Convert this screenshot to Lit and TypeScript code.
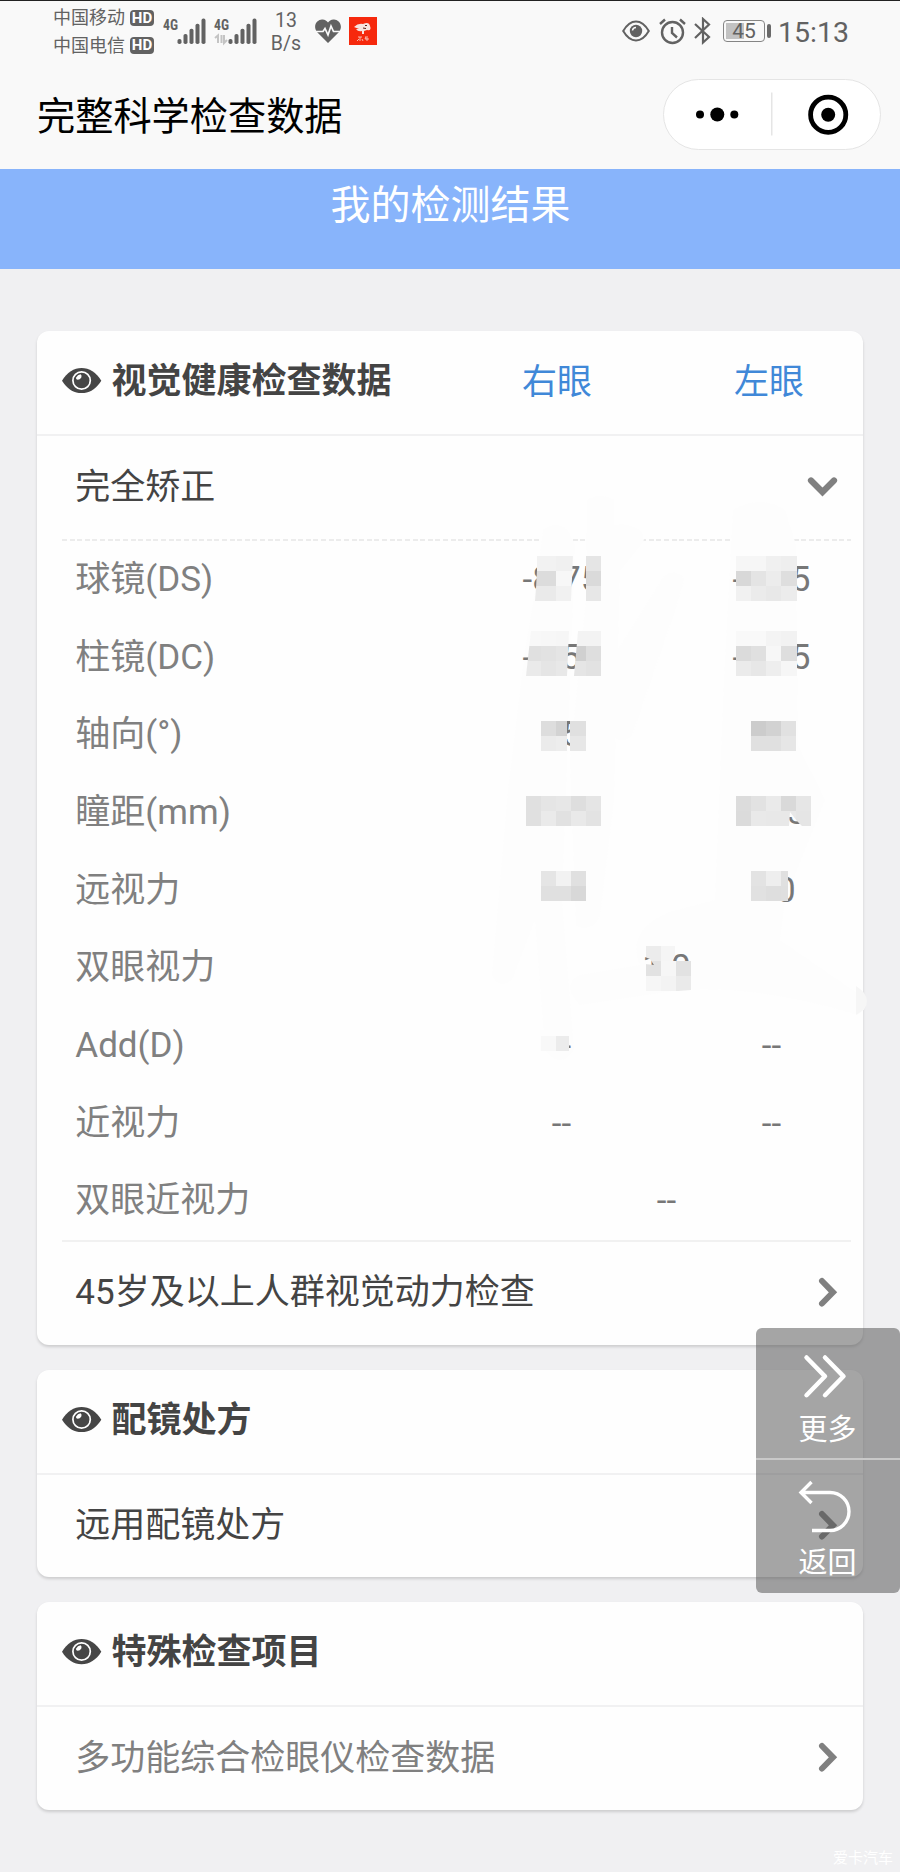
import { LitElement, html, css, svg } from "lit";
import { customElement, property } from "lit/decorators.js";

const EYE = svg`<path d="M0 12.700C5 4.500 12 0 19.600 0S34.300 4.500 39.300 12.700C34.300 21 27.200 25.200 19.600 25.200S5 21 0 12.700Z" fill="#464646"/>
  <circle cx="19.600" cy="12.500" r="8.700" fill="#464646" stroke="#fff" stroke-width="1.700"/>
  <path d="M14.200 9.500Q15.500 6.800 18.600 6.200Q20.300 7.600 19.200 9.700Q17.600 12.200 14.800 11.600Q13.700 11 14.200 9.500Z" fill="#fff"/>`;

@customElement("eye-title")
export class EyeTitle extends LitElement {
  @property() text = "";
  static styles = css`
    :host { display: flex; align-items: center; gap: 10px; }
    .eye { width: 39.300px; height: 25.200px; flex: none; position: relative; top: -1.800px; }
    .text { font-weight: 700; line-height: 52px; color: #444; white-space: nowrap; position: relative; top: -0.500px; }
  `;
  render() {
    return html`<svg class="eye" viewBox="0 0 39.3 25.2">${EYE}</svg><span class="text">${this.text}</span>`;
  }
}

@customElement("link-row")
export class LinkRow extends LitElement {
  @property() text = "";
  @property({ type: Boolean }) open = false;
  @property({ type: Boolean }) muted = false;
  static styles = css`
    :host { display: flex; align-items: center; justify-content: space-between; height: 100%;
      padding: 0 25.500px 2px 38px; color: #444; box-sizing: border-box; }
    .text { line-height: 52px; white-space: nowrap; position: relative; top: 1px; }
    .muted { color: #808080; }
    svg { flex: none; overflow: visible; }
  `;
  render() {
    return html`<span class="text ${this.muted ? "muted" : ""}">${this.text}</span>
      ${this.open
        ? html`<svg width="31" height="20" viewBox="0 0 31 20"><path d="M4 3.500L15.500 15L27 3.500" fill="none" stroke="#808080" stroke-width="6.200" stroke-linecap="round"/></svg>`
        : html`<svg width="20" height="31" viewBox="0 0 20 31"><path d="M4 4L15 15.300L4 26.500" fill="none" stroke="#808080" stroke-width="6" stroke-linecap="round"/></svg>`}`;
  }
}

// "#" is a covered digit and "_" a covered decimal point.
const rows: [string, string[]][] = [
  ["球镜(DS)", ["-8_75", "-#_#5"]],
  ["柱镜(DC)", ["-#_5#", "-#_#5"]],
  ["轴向(°)", ["#5", ""]],
  ["瞳距(mm)", ["", "##_5"]],
  ["远视力", ["", "#_0"]],
  ["双眼视力", ["1_0"]],
  ["Add(D)", ["--", "--"]],
  ["近视力", ["--", "--"]],
  ["双眼近视力", ["--"]],
];

// Mosaic patches: x, y, column width list, row height list, greys, optional clip outline.
type Patch = { x: number; y: number; w: number[]; h: number[]; g: number[][]; clip?: string };
const patches: Patch[] = [
  { x: 535, y: 555.5, w: [20.5, 15, 2], h: [15, 15, 15], g: [[242, 240, 240], [220, 247, 247], [234, 241, 241]],
    clip: "537,555 573,555 571,601 535,601 536,588 537,570" },
  { x: 586, y: 555.5, w: [15], h: [15, 15, 15], g: [[229], [218], [231]] },
  { x: 735.5, y: 555.5, w: [15, 15.5, 15, 15.5], h: [15, 15, 15], g: [[246, 246, 240, 238], [216, 228, 236, 222], [241, 235, 232, 236]] },
  { x: 526, y: 631, w: [14.5, 15, 13.5], h: [15, 15, 15], g: [[248, 247, 246], [224, 226, 229], [234, 229, 232]],
    clip: "531,631 569,631 567,676 526,676" },
  { x: 574, y: 631, w: [12, 15], h: [15, 15, 15], g: [[243, 243], [208, 222], [229, 226]],
    clip: "578,631 601,631 601,676 574,676" },
  { x: 735.5, y: 631, w: [15, 15.5, 15, 15.5], h: [15, 15, 15], g: [[249, 249, 244, 242], [219, 224, 247, 222], [235, 231, 238, 246]] },
  { x: 540.5, y: 721, w: [15, 11], h: [15, 15], g: [[221, 211], [235, 237]] },
  { x: 570, y: 721, w: [15.5], h: [15, 15], g: [[224], [231]] },
  { x: 750.5, y: 721, w: [15.5, 15, 15], h: [15, 15], g: [[204, 210, 225], [224, 224, 230]] },
  { x: 525.5, y: 796, w: [15, 15, 15, 15, 15], h: [15, 15], g: [[224, 229, 231, 222, 229], [224, 234, 225, 233, 227]] },
  { x: 735.5, y: 796, w: [15, 15, 15, 15, 15], h: [15, 15], g: [[220, 226, 234, 217, 230], [219, 233, 232, 232, 229]],
    clip: "735,796 811,796 811,826 802,826 797,821 790,812 789,826 735,826" },
  { x: 540.5, y: 871, w: [15, 15, 15.5], h: [15, 15], g: [[229, 242, 224], [224, 224, 216]] },
  { x: 750.5, y: 871, w: [15.5, 15, 6.5], h: [15, 15], g: [[227, 238, 224], [225, 222, 223]] },
  { x: 645.5, y: 946, w: [15, 15, 15], h: [15, 15, 15], g: [[236, 245, 255], [226, 246, 226], [246, 243, 234]],
    clip: "645,946 675,946 675,956 672,961 691,961 691,990 678,991 645,991 645,964 654,965 650,959 645,957" },
  { x: 540.5, y: 1036, w: [15, 13], h: [15], g: [[248, 236]] },
];

/* The faint brush marks that lie under the values. */
@customElement("brush-layer")
export class BrushLayer extends LitElement {
  static styles = css`
    :host { display: block; }
    svg { display: block; }
  `;
  render() {
    return html`<svg width="900" height="700" viewBox="0 430 900 700">
      <path fill="#fdfdfd" d="M543 530Q548 525 556 525T569 532L575 545L562 900L574 1050Q560 1070 545 1050L535 920L512 980Q498 990 492 975L508 790L525 650L537 580Z"/>
      <path fill="#fdfdfd" d="M587 500Q600 492 614 500V525Q640 522 644 540L620 570L614 800L600 915Q590 935 576 925L570 760L586 600Z"/>
      <path fill="#fdfdfd" d="M665 575Q678 568 684 580L675 610L632 735Q622 745 612 735L618 650Z"/>
      <path fill="#fdfdfd" d="M733 510Q760 494 785 510L796 545L798 745L825 800L785 900L780 940L860 995Q872 1005 858 1015Q760 985 680 990L580 1005Q560 985 580 975L640 965Q625 930 670 912L715 900L724 680Z"/>
      <path fill="#f6f6f6" d="M856 986Q867 993 867 1001T856 1015Z"/>
    </svg>`;
  }
}

@customElement("mosaic-layer")
export class MosaicLayer extends LitElement {
  static styles = css`
    :host { display: block; }
    svg { display: block; overflow: visible; }
  `;
  render() {
    return html`<svg width="900" height="700" viewBox="0 430 900 700" shape-rendering="crispEdges">
      <path fill="#fdfdfd" d="M540 1051H568.500V1030H540ZM735 826H789V830H735ZM750 901H786L787 896H750Z"/>
      ${patches.map((p, i) => {
        const cells: unknown[] = [];
        let y = p.y;
        p.h.forEach((h, r) => {
          let x = p.x;
          p.w.forEach((w, c) => {
            const v = p.g[r][c];
            if (v < 255) cells.push(svg`<rect x=${x} y=${y} width=${w} height=${h} fill=${`rgb(${v},${v},${v})`}></rect>`);
            x += w;
          });
          y += h;
        });
        return p.clip
          ? svg`<clipPath id=${"c" + i}><polygon points=${p.clip}></polygon></clipPath><g clip-path=${`url(#c${i})`}>${cells}</g>`
          : svg`<g>${cells}</g>`;
      })}
    </svg>`;
  }
}

@customElement("status-bar")
export class StatusBar extends LitElement {
  static styles = css`
    :host { display: flex; height: 62px; box-sizing: border-box; border-top: 1px solid #222; color: #626262;
      padding-left: 53px; align-items: flex-start; font-size: 18px; }
    .carriers { display: grid; grid-template-rows: 27.500px 27.500px; padding-top: 3px; }
    .carrier { display: flex; align-items: center; gap: 5px; line-height: 27px; }
    .hd { width: 24px; height: 16.500px; border-radius: 4px; background: #626262; color: #fff; font: 700 15px/17px Roboto, sans-serif;
      text-align: center; }
    .icons { width: 94px; height: 40px; margin: 7px 0 0 9px; }
    .g4 { font: 700 15px "Roboto Condensed", Roboto, sans-serif; fill: #626262; }
    .rate { width: 40px; margin: 8px 0 0 9px; text-align: center; font-size: 19.500px; line-height: 23px; }
    .heart { width: 26px; height: 24px; margin: 17.500px 0 0 9px; }
    .app { width: 28px; height: 28px; margin: 16px 0 0 8px; }
    .right { display: flex; margin-left: auto; padding-right: 52px; height: 60px; align-items: center; }
    .alarm { margin-left: 9px; }
    .bluetooth { margin-left: 8px; }
    .battery { width: 40px; height: 20px; border: 1.500px solid #858585; border-radius: 4px;
      background: linear-gradient(90deg, #c2c2c2 0 18px, transparent 18px) 2px 2px / 36px 16px no-repeat; margin-left: 12px;
      text-align: center; font-size: 21px; line-height: 21px; }
    .nub { width: 3.500px; height: 14px; border-radius: 2px; background: #6a6a6a; margin-left: 2px; }
    .time { font-size: 28.500px; line-height: 34px; margin-left: 8px; width: 69.500px; white-space: nowrap; position: relative; top: 2px; left: -0.500px; }
  `;
  bars(x: number) {
    return [0, 1, 2, 3, 4].map((i) => svg`<rect x=${x + i * 6} y=${31 - i * 5.1} width="4" height=${5 + i * 5.1} rx="1.8" fill="#626262"></rect>`);
  }
  render() {
    return html`
      <div class="carriers">
        <div class="carrier"><span>中国移动</span><span class="hd">HD</span></div>
        <div class="carrier"><span>中国电信</span><span class="hd">HD</span></div>
      </div>
      <svg class="icons" viewBox="0 0 94 40">
        <text class="g4" x="0" y="22" textLength="15" lengthAdjust="spacingAndGlyphs">4G</text>
        <text class="g4" x="51" y="22" textLength="15" lengthAdjust="spacingAndGlyphs">4G</text>
        ${this.bars(14.5)}${this.bars(65.5)}
        <path d="M52 30l3-2.500v7.500M58.500 27v8M61 27v8l3-3" fill="none" stroke="#c4c4c4" stroke-width="2"/>
      </svg>
      <div class="rate">13<br />B/s</div>
      <svg class="heart" viewBox="0 0 26 24"><path d="M13 24L2 13C-3 6 3 0 7.500 0.500C10 0.500 12 2 13 3.500C14 2 16 .5 18.500 .5C23 0 29 6 24 13Z" fill="#626262"/>
        <path d="M0 12.500H8L10 9.500L13 16L16 7L18.500 12.500H26" fill="none" stroke="#f9f9f9" stroke-width="1.700"/></svg>
      <svg class="app" viewBox="0 0 28 28"><rect width="28" height="28" fill="#f6290d"/>
        <path d="M5 10Q9 6 14 7Q20 4 21 9Q23 14 18 13L15 14V17H13V14Q9 15 7 12H10Z" fill="#f7e4df"/>
        <path d="M16 8.500h2M14 11l3 .5" stroke="#5b2018" stroke-width="1"/>
        <path d="M9 20h4M8 24l2-2M11 20v4M13 22l1 2M16 20l3 0M17 20l-1 2h4M18 21v3" stroke="#f7c8bd" fill="none" stroke-width=".9"/></svg>
      <div class="right">
        <svg width="28" height="22" viewBox="0 0 28 22"><path d="M1.200 11C5 4.500 9 1.500 14 1.500S23 4.500 26.800 11C23 17.500 19 20.500 14 20.500S5 17.500 1.200 11Z" fill="none" stroke="#626262" stroke-width="2"/>
          <circle cx="14" cy="11" r="6.200" fill="#626262"/><path d="M10.500 10.500A3.500 3.500 0 0 1 14 7.500" stroke="#f9f9f9" stroke-width="1.500" fill="none"/></svg>
        <svg class="alarm" width="27" height="27" viewBox="0 0 27 27"><circle cx="13.500" cy="14.500" r="10.500" fill="none" stroke="#626262" stroke-width="2.400"/>
          <path d="M13 9V15L18 19.500M1 6L6 1.500M21 1.500L26 6" fill="none" stroke="#626262" stroke-width="2.400"/></svg>
        <svg class="bluetooth" width="17" height="28" viewBox="0 0 17 28"><path d="M1 7L15 20L9 25.500V2L15 7.500L1 21" fill="none" stroke="#626262" stroke-width="2.200"/></svg>
        <div class="battery">45</div><div class="nub"></div>
        <div class="time">15:13</div>
      </div>`;
  }
}

@customElement("app-root")
export class AppRoot extends LitElement {
  static styles = css`
    :host { display: block; position: relative; width: 900px; height: 1872px; overflow: hidden; background: #f0f0f2;
      font-family: Roboto, "Noto Sans CJK SC", sans-serif; font-weight: 400; font-size: 35px; color: #808080; }
    .top { height: 168.500px; background: #f9f9f9; }
    .nav { height: 106px; box-sizing: border-box; padding: 17px 19px 18.500px 37px; display: flex; justify-content: space-between; align-items: center; }
    .nav h1 { margin: 0; font-size: 38.200px; font-weight: 400; color: #000; line-height: 56px; position: relative; top: 3px; }
    .capsule { width: 218px; height: 71px; box-sizing: border-box; border: 1.500px solid #e5e5e5; border-radius: 36px; background: #fff; }
    .capsule svg { display: block; margin: -1px; }
    .banner { height: 100px; background: #88b4fb; color: #fff; font-size: 40px; line-height: 60px; text-align: center; box-sizing: border-box; padding: 7.500px 0 0 1px; }
    .cards { padding: 62.500px 37px 0 37.300px; display: flex; flex-direction: column; gap: 25px; }
    .card { background: #fefefe; border-radius: 12px; box-shadow: 0 2px 3px rgba(0, 0, 0, .15); display: flow-root; }
    .head { height: 105px; box-sizing: border-box; border-bottom: 2px solid #f1f1f2; padding-left: 25px; display: flex; align-items: center; }
    .eyes { margin-left: auto; margin-right: -12px; display: grid; grid-template-columns: 212px 212px; text-align: center; color: #4088d8; line-height: 52px; }
    .line { height: 103px; }
    .dashed { height: 2px; margin: 0 12px 0 25px; background: repeating-linear-gradient(90deg, #ececec 0 5px, transparent 5px 7.620px); }
    .rows { position: relative; z-index: 2; }
    .row { display: grid; grid-template-columns: 381.200px 210px 210px; height: 77.700px; align-items: center; padding-left: 38px; width: 801px; line-height: 50px; white-space: nowrap; }
    .value { text-align: center; color: #777; }
    .both { grid-column: 2 / 4; }
    .digit { display: inline-block; width: .5615em; }
    .point { display: inline-block; width: .263em; }
    .solid { height: 2px; margin: 0 12px 0 25px; background: #f1f1f1; }
    .last { height: 102.600px; }
    .brush { position: absolute; left: 0; top: 430px; z-index: 1; }
    .mosaic { position: absolute; left: 0; top: 430px; z-index: 3; }
    .side { position: absolute; right: 0; top: 1327.500px; width: 144px; color: #fff; font-size: 29px; z-index: 4; }
    .tool { height: 130px; background: rgba(85, 85, 85, .53); box-sizing: border-box; padding-left: 42px; border-radius: 6px 6px 0 0; display: flex; flex-direction: column; }
    .tool + .tool { border-top: 2px solid #c9c9c9; border-radius: 0 0 6px 6px; height: 135px; background-clip: padding-box; }
    .tool svg { display: block; flex: none; }
    .tool span { line-height: 42px; padding-left: 0.500px; }
    .mark { position: absolute; right: 7px; bottom: 3px; font-size: 15px; line-height: 22px; color: #fff; }
  `;
  value(v: string) {
    return [...v].map((c) => (c === "#" ? html`<i class="digit"></i>` : c === "_" ? html`<i class="point"></i>` : c));
  }
  render() {
    return html`
      <div class="top">
        <status-bar></status-bar>
        <div class="nav">
          <h1>完整科学检查数据</h1>
          <div class="capsule"><svg width="217" height="70" viewBox="0 0 217 70">
            <circle cx="37" cy="35.500" r="4"/><circle cx="54.300" cy="35.500" r="7"/><circle cx="71.300" cy="35.500" r="4"/>
            <rect x="108" y="13.500" width="1.500" height="43" fill="#e5e5e5"/>
            <circle cx="165.200" cy="35.700" r="17.600" fill="none" stroke="#000" stroke-width="4.800"/><circle cx="165.200" cy="35.700" r="7"/>
          </svg></div>
        </div>
      </div>
      <div class="banner">我的检测结果</div>
      <div class="cards">
        <section class="card">
          <div class="head"><eye-title text="视觉健康检查数据"></eye-title>
            <div class="eyes"><span>右眼</span><span>左眼</span></div></div>
          <div class="line"><link-row text="完全矫正" open></link-row></div>
          <div class="dashed"></div>
          <div class="rows">
            ${rows.map(([label, vals]) => html`<div class="row"><span>${label}</span>
              ${vals.map((v) => html`<span class="value ${vals.length === 1 ? "both" : ""}">${this.value(v)}</span>`)}</div>`)}
          </div>
          <div class="solid"></div>
          <div class="last"><link-row text="45岁及以上人群视觉动力检查"></link-row></div>
        </section>
        <section class="card">
          <div class="head"><eye-title text="配镜处方"></eye-title></div>
          <div class="last"><link-row text="远用配镜处方"></link-row></div>
        </section>
        <section class="card">
          <div class="head"><eye-title text="特殊检查项目"></eye-title></div>
          <div class="last"><link-row text="多功能综合检眼仪检查数据" muted></link-row></div>
        </section>
      </div>
      <brush-layer class="brush"></brush-layer>
      <mosaic-layer class="mosaic"></mosaic-layer>
      <div class="side">
        <div class="tool"><svg width="60" height="81" viewBox="0 0 60 81"><path d="M8.500 29.500L27 48.300L8.500 67.200M27 29.500L45.500 48.300L27 67.200" fill="none" stroke="#fff" stroke-width="4.500" stroke-linecap="round" stroke-linejoin="round"/></svg><span>更多</span></div>
        <div class="tool"><svg width="60" height="82" viewBox="0 0 60 82"><path d="M13.500 22L3 32.500L13.500 43M3 32.500H32A19 19 0 0 1 32 70.500H14" fill="none" stroke="#fff" stroke-width="3.400"/></svg><span>返回</span></div>
      </div>
      <div class="mark">爱卡汽车</div>
    `;
  }
}
